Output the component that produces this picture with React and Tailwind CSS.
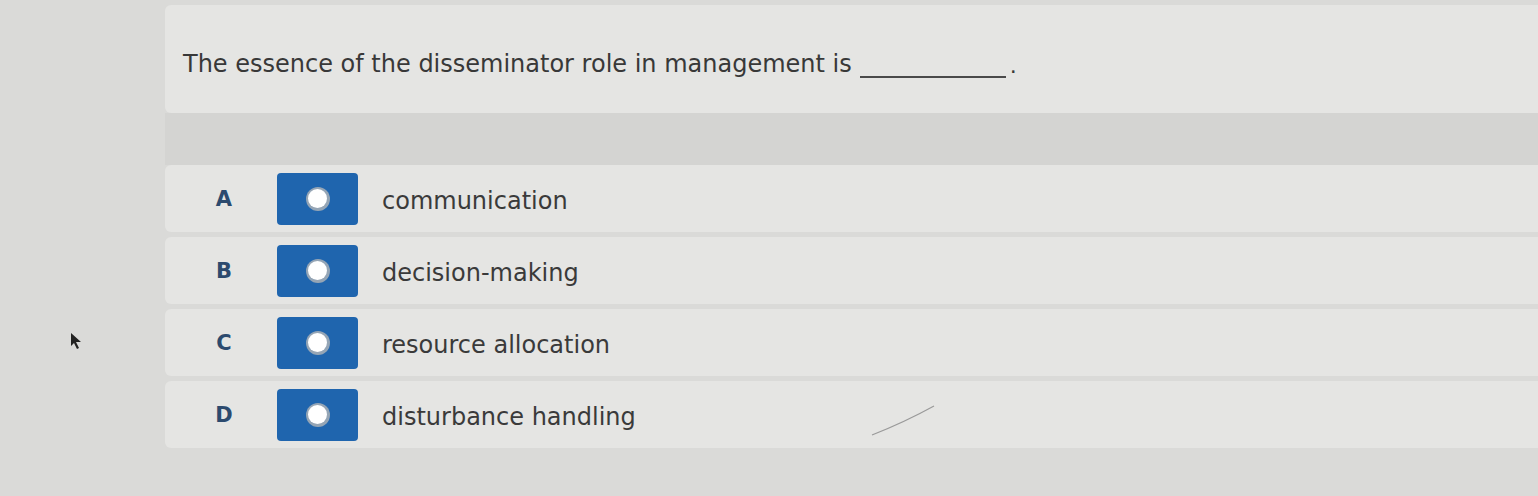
import React from "react";

const options = [
  { letter: "A", text: "communication" },
  { letter: "B", text: "decision-making" },
  { letter: "C", text: "resource allocation" },
  { letter: "D", text: "disturbance handling" },
];

function Radio() {
  return (
    <div className="w-[81px] h-[52px] shrink-0 rounded-[4px] bg-[#1f65ae] flex items-center justify-center">
      <div className="w-[24px] h-[24px] rounded-full bg-[#95a5b5] flex items-center justify-center">
        <div className="w-[19px] h-[19px] rounded-full bg-white" />
      </div>
    </div>
  );
}

export default function App() {
  return (
    <div
      className="relative w-[1538px] h-[496px] overflow-hidden bg-[#dadad8] pt-[5px] pl-[165px]"
      style={{ fontFamily: '"DejaVu Sans", Verdana, sans-serif' }}
    >
      <div className="h-[108px] rounded-l-[6px] bg-[#e5e5e3] flex items-center pl-[18px] pt-[10px]">
        <span className="text-[24px] text-[#383838]">
          The essence of the disseminator role in management is
        </span>
        <span className="inline-block w-[146px] ml-[8px] mt-[26px] border-b-[2px] border-[#4a4a4a]" />
        <span className="text-[22px] text-[#383838] ml-[4px] mt-[2px]">.</span>
      </div>
      <div className="h-[52px] bg-[#d4d4d2]" />
      <div className="flex flex-col gap-[5px]">
        {options.map((o) => (
          <div
            key={o.letter}
            className="h-[67px] rounded-l-[6px] bg-[#e5e5e3] flex items-center"
          >
            <div className="w-[112px] shrink-0 pl-[6px] pt-[2px] flex justify-center text-[21px] font-bold text-[#2c4a6e]">
              {o.letter}
            </div>
            <Radio />
            <div className="ml-[24px] pt-[4px] text-[24px] text-[#3a3a3a]">{o.text}</div>
          </div>
        ))}
      </div>
      <svg
        className="absolute left-[70px] top-[332px]"
        width="14"
        height="20"
        viewBox="0 0 14 20"
      >
        <path d="M1 1 L1 14 L4 11 L7 17 L9 16 L6 10 L11 10 Z" fill="#222" />
      </svg>
      <svg
        className="absolute left-[870px] top-[402px]"
        width="70"
        height="36"
        viewBox="0 0 70 36"
      >
        <path d="M2 33 Q 35 20 64 4" stroke="#9a9a9a" strokeWidth="1.2" fill="none" />
      </svg>
    </div>
  );
}
